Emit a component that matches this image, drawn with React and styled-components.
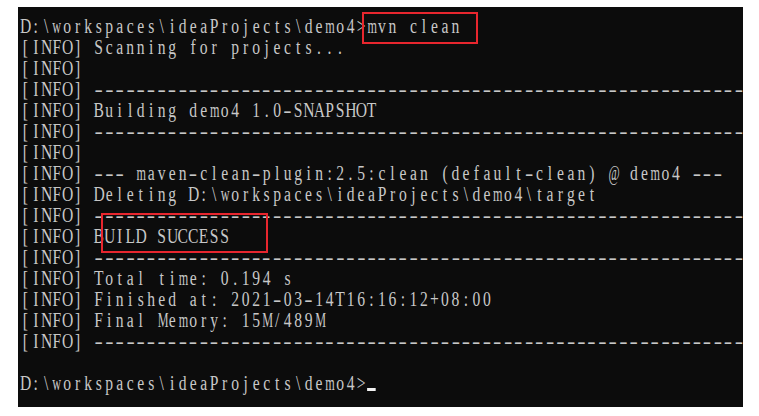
import React from "react";
import styled, { createGlobalStyle } from "styled-components";

const GlobalStyle = createGlobalStyle`
  html, body {
    margin: 0;
    padding: 0;
    background: #ffffff;
  }
`;

// console cell: 10.5px wide once the line is squeezed by SCALE
const SCALE = 0.78;
const CELL = 10.5 / SCALE;
const COLS = 69;
const WIDE = "MWmw@";

const Page = styled.div`
  width: 759px;
  height: 416px;
  padding: 7px 0 0 18px;
  box-sizing: border-box;
  overflow: hidden;
`;

const Terminal = styled.div`
  position: relative;
  width: 725px;
  height: 400px;
  background: #0c0c0c;
  padding: 9px 0 0 2px;
  box-sizing: border-box;
  overflow: hidden;
`;

const Line = styled.div`
  display: flex;
  width: ${CELL * COLS}px;
  height: 21px;
  line-height: 21px;
  font-family: "Liberation Serif", "Noto Sans CJK SC", serif;
  font-size: 20px;
  color: #c8c8c8;
  white-space: pre;
  transform: scaleX(${SCALE});
  transform-origin: left center;
`;

const Cell = styled.span`
  flex: none;
  width: ${CELL}px;
  text-align: center;
  transform: ${(p) =>
    p.$dash ? "scaleX(1.6)" : p.$wide ? "scaleX(0.78)" : "none"};
`;

const Cursor = styled.span`
  flex: none;
  align-self: flex-end;
  width: ${CELL * 0.85}px;
  height: 3px;
  margin: 0 0 3px 1px;
  background: #f2f2f2;
`;

const Highlight = styled.div`
  position: absolute;
  left: ${(p) => p.$x}px;
  top: ${(p) => p.$y}px;
  width: ${(p) => p.$w}px;
  height: ${(p) => p.$h}px;
  border: 2px solid #e8262e;
  box-sizing: border-box;
`;

const dashes = "-".repeat(COLS - 7);

const lines = [
  "D:\\workspaces\\ideaProjects\\demo4>mvn clean",
  "[INFO] Scanning for projects...",
  "[INFO]",
  `[INFO] ${dashes}`,
  "[INFO] Building demo4 1.0-SNAPSHOT",
  `[INFO] ${dashes}`,
  "[INFO]",
  "[INFO] --- maven-clean-plugin:2.5:clean (default-clean) @ demo4 ---",
  "[INFO] Deleting D:\\workspaces\\ideaProjects\\demo4\\target",
  `[INFO] ${dashes}`,
  "[INFO] BUILD SUCCESS",
  `[INFO] ${dashes}`,
  "[INFO] Total time: 0.194 s",
  "[INFO] Finished at: 2021-03-14T16:16:12+08:00",
  "[INFO] Final Memory: 15M/489M",
  `[INFO] ${dashes}`,
  "",
];

function ConsoleLine({ text, children }) {
  return (
    <Line>
      {text.split("").map((ch, i) => (
        <Cell key={i} $dash={ch === "-"} $wide={WIDE.includes(ch)}>
          {ch}
        </Cell>
      ))}
      {children}
    </Line>
  );
}

export default function App() {
  return (
    <>
      <GlobalStyle />
      <Page>
        <Terminal>
          {lines.map((text, i) => (
            <ConsoleLine key={i} text={text} />
          ))}
          <ConsoleLine text={"D:\\workspaces\\ideaProjects\\demo4>"}>
            <Cursor />
          </ConsoleLine>
          <Highlight $x={344} $y={5} $w={116} $h={32} />
          <Highlight $x={83} $y={206} $w={167} $h={40} />
        </Terminal>
      </Page>
    </>
  );
}
